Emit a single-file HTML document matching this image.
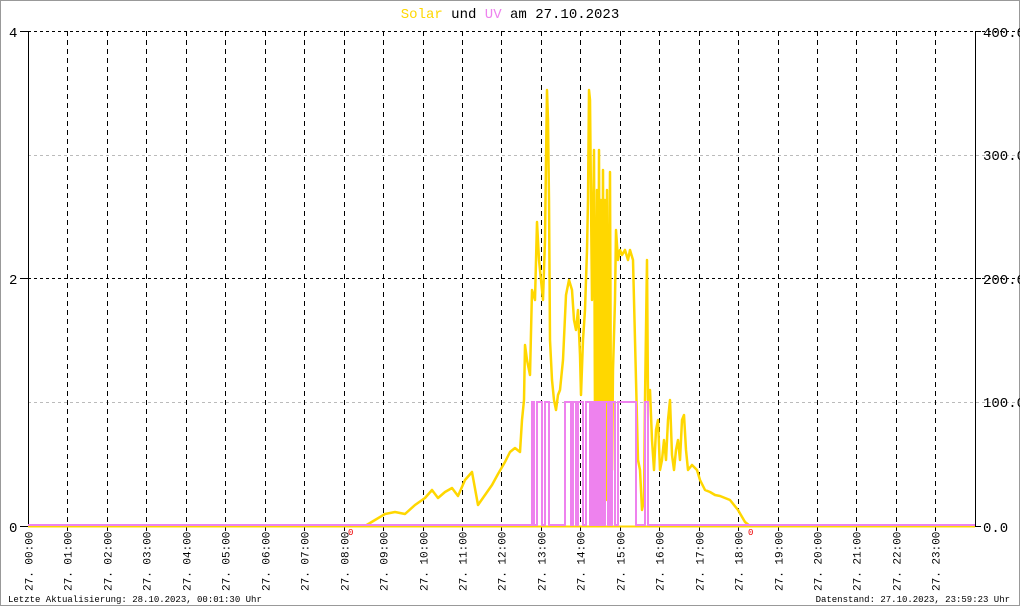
<!DOCTYPE html>
<html><head><meta charset="utf-8"><style>
html,body{margin:0;padding:0;background:#fff}
svg{display:block}
text{font-family:"Liberation Mono","DejaVu Sans Mono",monospace}
</style></head><body>
<svg width="1020" height="606" viewBox="0 0 1020 606" xmlns="http://www.w3.org/2000/svg">
<rect x="0.5" y="0.5" width="1019" height="605" fill="#fff" stroke="#999"/>
<text x="510" y="18" font-size="14" text-anchor="middle"><tspan fill="#ffd700">Solar</tspan> und <tspan fill="#ee82ee">UV</tspan> am 27.10.2023</text>
<g stroke="#bbb" stroke-dasharray="3,3" stroke-width="1">
<line x1="28" y1="155.5" x2="1020" y2="155.5"/>
<line x1="28" y1="402.5" x2="1020" y2="402.5"/>
</g>
<g stroke="#000" stroke-dasharray="3,3" stroke-width="1">
<line x1="28" y1="31.5" x2="1020" y2="31.5"/>
<line x1="28" y1="278.5" x2="1020" y2="278.5"/>
</g>
<g id="vg" stroke="#000" stroke-dasharray="5,4" stroke-width="1"></g>
<line x1="28.5" y1="31" x2="28.5" y2="527" stroke="#000"/>
<line x1="975.5" y1="31" x2="975.5" y2="527" stroke="#000"/>
<line x1="20" y1="31.5" x2="28" y2="31.5" stroke="#000"/>
<line x1="20" y1="278.5" x2="28" y2="278.5" stroke="#000"/>
<line x1="20" y1="526.5" x2="28" y2="526.5" stroke="#000"/>
<line x1="975" y1="31.5" x2="981" y2="31.5" stroke="#000"/>
<line x1="975" y1="278.5" x2="981" y2="278.5" stroke="#000"/>
<line x1="975" y1="526.5" x2="981" y2="526.5" stroke="#000"/>
<g font-size="14" fill="#000">
<text x="9" y="37">4</text><text x="9" y="284">2</text><text x="9" y="532">0</text>
<text x="983" y="37">400.0</text><text x="983" y="160">300.0</text><text x="983" y="284">200.0</text><text x="983" y="407">100.0</text><text x="983" y="532">0.0</text>
</g>
<line x1="28" y1="526.5" x2="975" y2="526.5" stroke="#ffd700" stroke-width="2"/>
<polyline fill="none" stroke="#ffd700" stroke-width="2.5" stroke-linejoin="round" points="365,526 375,520 385,514 395,512 405,514 415,505 425,498 432,490 438,498 445,492 452,488 458,496 465,480 472,472 478,505 485,495 492,485 498,474 505,462 510,452 515,448 520,452 522,420 524,400 525,345 527,360 530,375 532,290 535,300 537,222 539,260 541,280 543,300 545,240 546,160 547,90 548,120 549,200 550,340 552,380 554,400 556,410 558,395 560,390 563,360 566,295 569,280 572,290 574,320 576,330 578,310 580,355 581,395 583,340 585,310 587,250 588,200 589,90 590,100 592,300 594,150 595,420 597,190 598,500 599,150 600,450 601,200 602,480 603,170 604,470 605,200 606,500 607,190 608,460 610,172 611,440 612,470 613,370 615,300 616,230 618,260 620,250 622,255 625,250 628,260 630,250 633,260 634,300 636,380 638,460 640,470 642,510 644,500 645,400 647,260 648,400 650,390 652,440 654,470 656,430 658,420 660,470 662,460 664,440 666,460 668,420 670,400 672,455 674,470 676,450 678,440 680,460 682,420 684,415 686,450 688,470 692,465 697,470 700,480 705,490 710,492 715,495 720,496 730,500 738,510 745,522 750,526"/>
<polyline fill="none" stroke="#ee82ee" stroke-width="2" points="28,525 532,525 532,402 534,402 534,525 537,525 537,402 542,402 542,525 545,525 545,402 549,402 549,525 565,525 565,402 571,402 571,525 573,525 573,402 576,402 576,525 578,525 578,402 583,402 583,525 586,525 586,402 590,402 590,525 591,525 591,402 593,402 593,525 594,525 594,402 596,402 596,525 597,525 597,402 599,402 599,525 600,525 600,402 602,402 602,525 603,525 603,402 604,402 604,525 605,525 605,402 608,402 608,525 609,525 609,402 611,402 611,525 612,525 612,402 615,402 615,525 618,525 618,402 636,402 636,525 645,525 645,402 648,402 648,525 975,525"/>
<text x="348" y="535" font-size="9" fill="#e00">0</text>
<text x="748" y="535" font-size="9" fill="#e00">0</text>
<g id="xl" font-size="11" fill="#000"></g>
<text x="8" y="602" font-size="9" fill="#000">Letzte Aktualisierung: 28.10.2023, 00:01:30 Uhr</text>
<text x="1010" y="602" font-size="9" fill="#000" text-anchor="end">Datenstand: 27.10.2023, 23:59:23 Uhr</text>
</svg>
<script>
var ns="http://www.w3.org/2000/svg",vg=document.getElementById("vg"),xl=document.getElementById("xl");
for(var i=0;i<24;i++){var x=Math.round(28+i*39.45)+0.5;
if(i>0){var l=document.createElementNS(ns,"line");l.setAttribute("x1",x);l.setAttribute("x2",x);l.setAttribute("y1",31);l.setAttribute("y2",531);vg.appendChild(l);}
var t=document.createElementNS(ns,"text");var h=(i<10?"0":"")+i;t.textContent="27. "+h+":00";
t.setAttribute("transform","translate("+(x+4)+",591) rotate(-90)");xl.appendChild(t);}
</script>
</body></html>
